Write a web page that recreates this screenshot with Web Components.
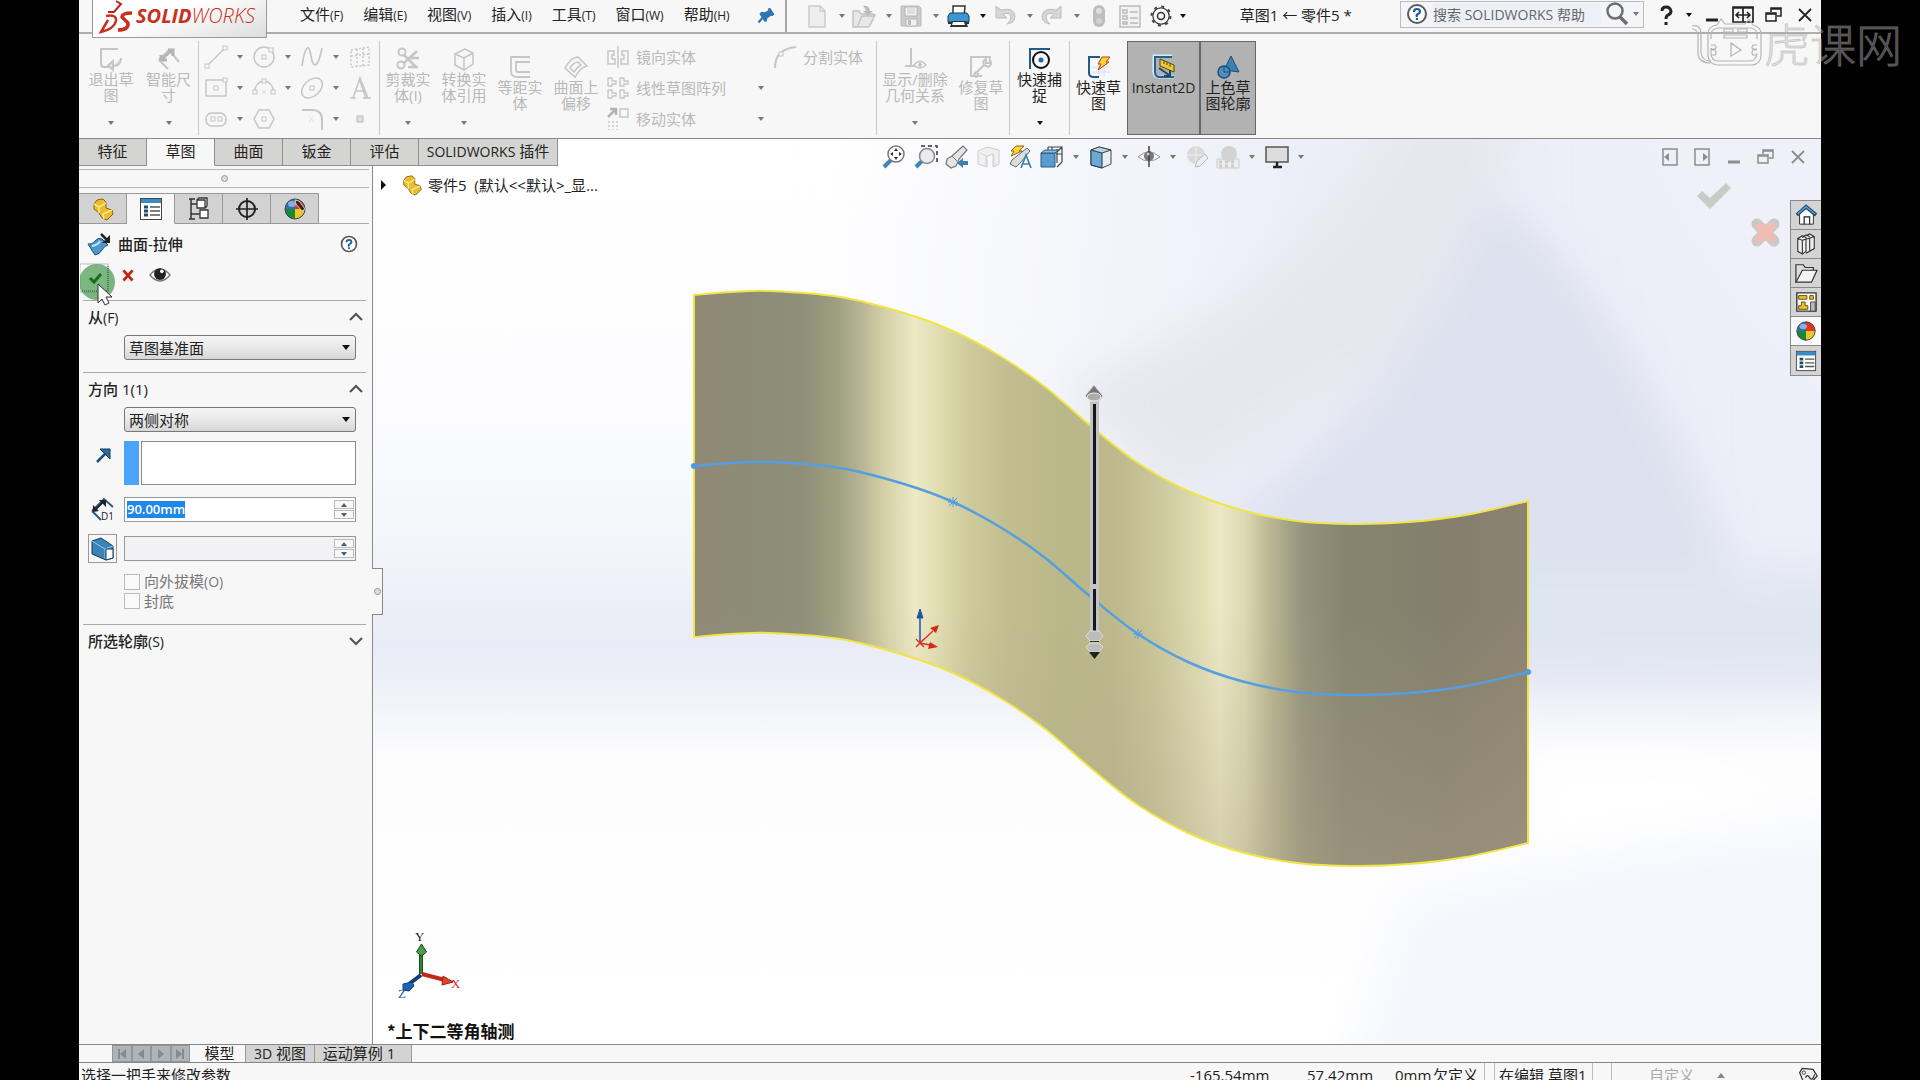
<!DOCTYPE html>
<html lang="zh-CN">
<head>
<meta charset="utf-8">
<title>SOLIDWORKS - 草图1 ← 零件5</title>
<style>
  html, body { margin: 0; height: 100%; background: #000; overflow: hidden; }
  body { font: 15px/16px "Open Sans", "Noto Sans CJK SC", sans-serif; color: #222; }
</style>
</head>
<body>
<sw-app></sw-app>
<script>
const G = '#c6c6c6';
const dot = (x, y, c = G) => `<rect x="${x - 2}" y="${y - 2}" width="4" height="4" fill="#f7f7f7" stroke="${c}"/>`;
const part = `<path d="M3 7l3-4 6-1 3 3v6l6 2 1 4-6 6-5-2-3-5-5-4z" fill="#e9bd2b" stroke="#8d6410"/><path d="M3 7l5 3v6m0-6l7-4M13 22l-1-5 9-4" fill="none" stroke="#fbe88e" stroke-width="1.5"/>`;
const ball = `<circle cx="12" cy="12" r="10" fill="#2a6fc0"/><path d="M12 2a10 10 0 0 1 10 10H12z" fill="#d93a20"/><path d="M22 12a10 10 0 0 1-10 10V12z" fill="#edc52d"/><path d="M12 22A10 10 0 0 1 2 12h10z" fill="#1c8a35"/><circle cx="12" cy="12" r="10" fill="none" stroke="#444"/><ellipse cx="9" cy="7" rx="4" ry="3" fill="#fff" opacity=".45"/>`;
const sheet = `<rect x="1.5" y="1.5" width="21" height="21" fill="#fff" stroke="#444"/><path d="M2 2h20v4H2z" fill="#3a8cc8"/><path d="M5 10h4M5 14h4M5 18h4" stroke="#234a66" stroke-width="3"/><path d="M11 10h10M11 14h10M11 18h10" stroke="#555" stroke-width="1.5"/>`;
const ICONS = {
  exit: `<path d="M11 20H5q-3 0-3-3V2h17" stroke="${G}" stroke-width="2" fill="none"/><path d="M22 11q0 8-8 8m0-5v9l-5-4.500z" stroke="${G}" stroke-width="2" fill="${G}" fill-opacity=".4"/>`,
  dim: `<path d="M2 13l10-10 10 12M2 13l9 9" fill="none" stroke="${G}" stroke-width="2"/><path d="M5 12l9-8M4 8v5h6M11 3h5v6" fill="none" stroke="#b4b4b4" stroke-width="3"/>`,
  line: `<path d="M3 21L21 3" stroke="${G}" stroke-width="1.500"/>${dot(3, 21)}${dot(21, 3)}`,
  circle: `<circle cx="12" cy="12" r="10" fill="none" stroke="${G}" stroke-width="1.500"/>${dot(12, 12)}${dot(19, 5)}`,
  spline: `<path d="M2 21C5 0 9-2 11 11s7 13 11-8" fill="none" stroke="${G}" stroke-width="1.700"/>`,
  plane: `<path d="M3 5l18-3v18l-18 2zM9 4v17M15 3v18M3 11l18-2" fill="none" stroke="${G}" stroke-width="1.500" stroke-dasharray="2 2"/>`,
  rect: `<rect x="2" y="4" width="20" height="16" fill="none" stroke="${G}" stroke-width="1.500"/>${dot(12, 12)}${dot(21, 4)}`,
  arc: `<path d="M2 17Q4 5 12 5t10 12" fill="none" stroke="${G}" stroke-width="1.500"/>${dot(3, 16)}${dot(12, 5)}${dot(21, 16)}<path d="M10 14l4 4m0-4l-4 4" stroke="#ddd"/>`,
  ellipse: `<ellipse cx="12" cy="12" rx="12" ry="8" transform="rotate(-42 12 12)" fill="none" stroke="${G}" stroke-width="1.500"/>${dot(12, 12)}`,
  textA: `<path d="M2 22h6M15 22h8M5 22L12 2l8 20M8 15h9M12 5l6 17" fill="none" stroke="${G}" stroke-width="1.500"/>`,
  slot: `<rect x="2" y="6" width="20" height="13" rx="6" fill="none" stroke="${G}" stroke-width="1.500"/>${dot(9, 12)}${dot(16, 12)}`,
  hex: `<path d="M7 3h10l5 9-5 9H7l-5-9z" fill="none" stroke="${G}" stroke-width="1.500"/>${dot(12, 12)}`,
  fillet: `<path d="M2 3h10q10 0 10 10v10" fill="none" stroke="${G}" stroke-width="2"/><path d="M9 9l5 6m0-6l-5 6" stroke="#e2e2e2"/>`,
  point: `<rect x="9" y="9" width="6" height="6" fill="#ddd" stroke="#bbb"/>`,
  trim: `<circle cx="6" cy="5" r="3.500" fill="none" stroke="${G}" stroke-width="2"/><circle cx="5" cy="18" r="3.500" fill="none" stroke="${G}" stroke-width="2"/><path d="M8 8l13 13M8 16L21 4M15 11h8M12 20h10" stroke="${G}" stroke-width="2.500"/>`,
  convert: `<path d="M3 7l10-5 8 4v11l-9 6-9-5zM3 7l9 4 9-5M12 11v12" fill="none" stroke="${G}" stroke-width="1.500"/>`,
  offset: `<path d="M22 2H3v14q0 6 6 6h13M22 7H8v8q0 2 2 2h12" fill="none" stroke="${G}" stroke-width="1.800"/>`,
  surfoff: `<path d="M1 13Q7 2 14 2l9 9q-6 1-12 11zM6 13q4-6 8-6l3 3q-4 2-7 7z" fill="none" stroke="${G}" stroke-width="1.500"/>`,
  mirror: `<path d="M12 1v22M2 6h6v4H6v4h3v5H2zM22 6h-6v4h2v4h-3v5h7z" fill="none" stroke="${G}" stroke-width="1.500"/>`,
  pattern: `<g fill="none" stroke="${G}" stroke-width="1.300"><path d="M2 2h4v3h4v3H6v2H2z"/><path d="M14 2h4v3h4v3h-4v2h-4zM2 14h4v3h4v3H6v2H2zM14 14h4v3h4v3h-4v2h-4z"/></g>`,
  move: `<path d="M2 10l7-7M4 2h6v6" stroke="#b4b4b4" stroke-width="2.500" fill="none"/><rect x="14" y="2" width="8" height="8" fill="none" stroke="${G}" stroke-width="1.500"/><path d="M3 14v9M7 14v9M11 14v9" stroke="#d4d4d4" stroke-width="2" stroke-dasharray="2 2"/>`,
  split: `<path d="M2 23Q2 4 23 2" fill="none" stroke="${G}" stroke-width="2"/>${dot(8, 9)}`,
  rel: `<path d="M8 1v18M2 19h11" stroke="${G}" stroke-width="2"/><path d="M11 18q6-7 12 0-6 6-12 0z" fill="#f7f7f7" stroke="${G}" stroke-width="1.500"/><circle cx="17" cy="18" r="2" fill="${G}"/>`,
  repair: `<path d="M13 21H2V2h20" fill="none" stroke="${G}" stroke-width="2"/><path d="M6 19l9-9m0 0q-2-4 2-6v4h4V5q3 5-2 7zM7 17q-4 4 0 5 3-1 2-4" stroke="${G}" stroke-width="2" fill="none"/>`,
  snap: `<path d="M2 22V2h20" fill="none" stroke="#1d5c8c" stroke-width="2"/><circle cx="13" cy="13" r="8" fill="none" stroke="#111" stroke-width="2"/><circle cx="13" cy="13" r="2.500" fill="#1d6ba8"/>`,
  rapid: `<path d="M12 8v14M17 8v14M5 12h18M5 17h18" stroke="#d8dfe6"/><path d="M13 2H2v16q0 4 5 4h5" fill="none" stroke="#1d5c8c" stroke-width="2"/><path d="M15 2h8l-4 5h3L11 15l3-6h-3z" fill="#ffd33a" stroke="#b0401c"/>`,
  instant: `<path d="M20 1H2v16q0 5 5 5h15" fill="none" stroke="#dceaf4" stroke-width="3"/><path d="M20 2H3v15q0 5 5 5h14" fill="none" stroke="#1d6396" stroke-width="2"/><path d="M8 4l14 6v7L8 11z" fill="#ecc936" stroke="#54480e"/><path d="M12 6v3m3-2v3m3-1v3" stroke="#54480e"/><path d="M7 13l10 7m1-5v6h-6" stroke="#1c4968" stroke-width="2" fill="none"/>`,
  shaded: `<path d="M15 1l8 16-15-2z" fill="#3b80b4" stroke="#1c4e76"/><circle cx="8" cy="17" r="6" fill="#4b8fc0" stroke="#1c4e76" stroke-width="1.500"/><path d="M8 11v6h6" fill="none" stroke="#1c4e76"/>`,
  newdoc: `<path d="M4 2h11l5 5v16H4zM15 2v5h5" fill="#eee" stroke="#ccc" stroke-width="1.500"/>`,
  open: `<path d="M1 23V7h6l2 3h12l2 1-6 12zM5 23l5-11h13" fill="#e8e8e8" stroke="#c4c4c4" stroke-width="1.500"/><path d="M11 2q6-1 7 5h3l-5 5-5-5h3q0-2-3-5z" fill="#bbb"/>`,
  save: `<path d="M2 2h18l2 2v18H2z" fill="#ccc" stroke="#bbb"/><path d="M6 3h12v9H6zM7 15h11v7H7z" fill="#f2f2f2" stroke="#b4b4b4"/><path d="M8 5h8M8 7h8M8 9h8" stroke="#ccc"/><path d="M9 16h3v5H9z" fill="#bbb"/>`,
  print: `<path d="M7 12V2h12l-1 10" fill="#fff" stroke="#333" stroke-width="1.500"/><path d="M2 12l2-3h17l2 3v6H2z" fill="#3c96d0" stroke="#123f60"/><path d="M2 18h21v2H2zM6 17h14l2 6H4z" fill="#333"/><path d="M7 18h11l1 3H6z" fill="#fff"/>`,
  undo: `<path d="M3 2v12h11l-4-4q7-2 8 3 0 4-4 7 8-1 8-8-1-9-14-6z" fill="#d6d6d6" stroke="#bebebe"/>`,
  redo: `<path d="M21 2v12H10l4-4q-7-2-8 3 0 4 4 7-8-1-8-8 1-9 14-6z" fill="#d6d6d6" stroke="#bebebe"/>`,
  lights: `<rect x="6" y="1" width="12" height="22" rx="6" fill="#bdbdbd"/><circle cx="12" cy="7" r="3" fill="#dedede"/><circle cx="12" cy="17" r="3" fill="#d0d0d0"/>`,
  options: `<rect x="2" y="2" width="20" height="21" fill="#f2f2f2" stroke="#bdbdbd" stroke-width="1.500"/><path d="M5 6h4v3H5zM5 12h4v3H5zM5 18h4v2H5z" fill="none" stroke="#bbb" stroke-width="1.500"/><path d="M12 8h8M12 14h8M12 19h8" stroke="#bbb" stroke-width="1.500"/>`,
  gear: `<circle cx="12" cy="12" r="8" fill="none" stroke="#333" stroke-width="1.500"/><circle cx="12" cy="12" r="9.500" fill="none" stroke="#444" stroke-width="2" stroke-dasharray="3 4.460"/><circle cx="12" cy="12" r="7.500" fill="#f7f7f7"/><circle cx="12" cy="12" r="3.500" fill="none" stroke="#333" stroke-width="1.500"/>`,
  pin: `<path d="M13 4l3-1 6 7-2 2-2 0-4 4v4l-3 0-7-8 2-3 4 0 4-3z" fill="#2f75b5" transform="rotate(8 12 12)"/><path d="M8 15l-5 6" stroke="#2f75b5" stroke-width="2.500"/>`,
  help: `<circle cx="12" cy="12" r="9" fill="#fff" stroke="#5a5a5a" stroke-width="2"/><path d="M9 10q0-3 3-3t3 3q0 1-2 2t-1 3m0 1v2" fill="none" stroke="#1d5f98" stroke-width="2.200"/>`,
  search: `<circle cx="10" cy="9" r="7.500" fill="none" stroke="#6e6e6e" stroke-width="2.500"/><path d="M15 15l7 7" stroke="#6e6e6e" stroke-width="3.500"/>`,
  q: `<path d="M8 8q0-4 4-4t5 4q0 3-3 4-2 1-2 4m0 3v3" fill="none" stroke="#222" stroke-width="3"/>`,
  min: `<path d="M6 17h12" stroke="currentColor" stroke-width="3"/>`,
  spread: `<path d="M2 4h20v15H2zM2 5h20M12 4v15" fill="none" stroke="#222" stroke-width="1.700"/><path d="M5 12h14M8 9l-3 3 3 3m8-6l3 3-3 3" fill="none" stroke="#222" stroke-width="1.500"/>`,
  restore: `<path d="M4 10h10v8H4zM4 11h10M9 9V5h10v8h-4M9 6h10" fill="none" stroke="currentColor" stroke-width="1.500"/>`,
  close: `<path d="M6 6l12 12M18 6L6 18" stroke="currentColor" stroke-width="1.800"/>`,
  dockl: `<path d="M5 4h14v16H5z" fill="none" stroke="currentColor" stroke-width="1.500"/><path d="M6 12l5-4v8z" fill="currentColor"/>`,
  dockr: `<path d="M5 4h14v16H5z" fill="none" stroke="currentColor" stroke-width="1.500"/><path d="M18 12l-5-4v8z" fill="currentColor"/>`,
  zoomfit: `<path d="M9 15l-7 7" stroke="#3f86b8" stroke-width="4"/><circle cx="14" cy="9" r="8" fill="#fff" stroke="#777" stroke-width="1.500"/><path d="M14 3l2 3h-4zM14 15l2-3h-4zM8 9l3-2v4zM20 9l-3-2v4z" fill="#333"/>`,
  zoomarea: `<path d="M7 1h16v16" fill="none" stroke="#333" stroke-width="1.500" stroke-dasharray="4 3"/><path d="M8 16l-6 6" stroke="#3f86b8" stroke-width="4"/><circle cx="13" cy="11" r="7.500" fill="#e9ecf0" stroke="#888" stroke-width="1.500"/>`,
  prev: `<path d="M2 14l5-3L18 1l4 4-8 9-3 7-5 2-5-4z" fill="#e4e4e4" stroke="#777" stroke-width="1.200"/><path d="M7 11l5 5" stroke="#777"/><path d="M23 18h-8" stroke="#3a80b0" stroke-width="4"/><path d="M12 18l6-5v10z" fill="#3a80b0"/>`,
  section: `<path d="M1 6l9-4 12 3v14l-6 3V9l-6 2v11l-9-3z" fill="#f0f0f0" stroke="#ccc"/><path d="M3 8l6 3v10M17 9v12" stroke="#d4d4d4" fill="none"/>`,
  dyn: `<path d="M8 1h8l-5 5h3L3 11l3-5H3z" fill="#ffd33a" stroke="#8a6a10"/><path d="M4 15L19 3l3 3-9 11-5 5-6-3z" fill="#ddd" stroke="#666"/><path d="M13 23l5-13 5 13M14 19h7" fill="none" stroke="#3a80b0" stroke-width="1.700"/>`,
  orient: `<path d="M8 2h14v15M12 2v10M17 4v14M8 2v5M22 17l-5 5M22 2l-5 5M22 9h-6M14 5v5" fill="none" stroke="#444" stroke-width="1.200"/><path d="M1 8h14v14H1z" fill="#5a9ccc" stroke="#245b85"/><path d="M1 8l4-3h14l-4 3z" fill="#8cbddf" stroke="#245b85"/>`,
  style: `<path d="M2 5l8-3 12 3v14l-9 4-11-3z" fill="#e9eef2" stroke="#444"/><path d="M2 5l11 3v15L2 20z" fill="#6ba8d2" stroke="#235"/><path d="M2 5l8-3 12 3-9 3z" fill="#b8d4e8" stroke="#444"/>`,
  eye: `<path d="M1 12Q12 2 23 12 12 20 1 12z" fill="#f4f4f4" stroke="#999"/><circle cx="12" cy="11" r="5" fill="#777"/><path d="M12 1v21" stroke="#444" stroke-width="1.500"/><circle cx="11" cy="9" r="1.500" fill="#ccc"/>`,
  appear: `<circle cx="11" cy="10" r="9" fill="#d9d9d9"/><path d="M2 10h18M11 1v18" stroke="#eee"/><path d="M10 22l2-6 8-7 3 4-8 8z" fill="#efefef" stroke="#bbb"/>`,
  scene: `<path d="M1 14h22v9H1z" fill="#eee" stroke="#ccc"/><path d="M3 17h18M3 21h18" stroke="#ccc" stroke-width="3" stroke-dasharray="3 3"/><circle cx="13" cy="9" r="8" fill="#d3d3d3"/>`,
  monitor: `<path d="M1 2h22v15H1z" fill="#ddd" stroke="#555" stroke-width="1.500"/><path d="M12 17v4M8 22h9" stroke="#222" stroke-width="2.500"/>`,
  part, ball, sheet,
  tree: `<path d="M4 2v20M2 2h6M2 22h6M4 7h8M4 17h9" fill="none" stroke="#333" stroke-width="1.500"/><path d="M10 3h8v8h-8zM13 13h8v8h-8zM10 3l2-2h8v8l-2 2" fill="#fff" stroke="#333" stroke-width="1.300"/>`,
  target: `<circle cx="12" cy="12" r="8" fill="none" stroke="#222" stroke-width="2"/><path d="M12 1v22M1 12h22" stroke="#222" stroke-width="1.700"/>`,
  display: ball + `<path d="M12 3l4 1 6 8-3 2-6-7z" fill="#35251b" stroke="#eee" stroke-width=".8"/>`,
  surface: `<path d="M1 12q4 1 7-3t7-2l6 6q-4 1-6 5t-7 5z" fill="#4d97cd" stroke="#1b4d78"/><path d="M5 14q6-1 8-5" stroke="#bfe0f5" fill="none" stroke-width="2"/><path d="M14 2l7 7" stroke="#222" stroke-width="2.500"/><path d="M23 3v8h-8z" fill="#222"/>`,
  xred: `<path d="M7 7l10 11M17 7L7 18" stroke="#c42614" stroke-width="3"/>`,
  preview: `<path d="M1 12Q12-1 23 12 12 25 1 12z" fill="#fff" stroke="#777" stroke-width="1.500"/><circle cx="12" cy="11" r="6.500" fill="#222"/><circle cx="14" cy="8" r="2" fill="#fff"/>`,
  dir: `<path d="M6 19L14 11" stroke="#1f4f78" stroke-width="2.500"/><path d="M9 6h10v10z" fill="#2a6ca0" stroke="#163c5c"/>`,
  d1: `<path d="M1 13L13 1l9 8M1 13l9 9" fill="none" stroke="#235e8e" stroke-width="2"/><path d="M5 11l7-7" stroke="#222" stroke-width="2"/><path d="M2 14V7l6 6zM8 2h7v7z" fill="#222"/><text x="10" y="22" font-family="Open Sans, sans-serif" font-size="10" fill="#222">D1</text>`,
  draft: `<path d="M1 4l9-3 12 8v12l-7 2-14-6z" fill="#3b83b7" stroke="#133a5a"/><path d="M1 4l13 8v10M14 12l8-3" stroke="#9cc9e8" fill="none"/><path d="M15 12h7v9l-7 2z" fill="#fff" stroke="#133a5a"/>`,
  up: `<path d="M6 15l6-6 6 6" fill="none" stroke="#555" stroke-width="2.200"/>`,
  down: `<path d="M6 9l6 6 6-6" fill="none" stroke="#555" stroke-width="2.200"/>`,
  home: `<path d="M5 11v11h15V11l-7-7z" fill="#fff" stroke="#222"/><path d="M10 22v-8h6v8" fill="none" stroke="#222" stroke-width="1.300"/><path d="M2 12L12 3l11 9" fill="none" stroke="#1e4d72" stroke-width="4"/><path d="M3 11l9-8 10 8" fill="none" stroke="#5ea1ce" stroke-width="1.500"/>`,
  library: `<path d="M3 6l5-3 4 2v15l-4 3-5-3zM8 5l4-3 4 2M12 3l4-2 5 3v13l-9 5M3 6l5 2v15M12 6v15M16 5v15M8 8l13-4" fill="#eee" stroke="#333" stroke-width="1.200"/>`,
  folder: `<path d="M1 22V3h8l2 3h9v3" fill="#ddd" stroke="#333" stroke-width="1.300"/><path d="M1 22L8 9h16l-6 13z" fill="#f3f3f3" stroke="#333" stroke-width="1.300"/>`,
  palette: `<path d="M2 2h21v20H2z" fill="#fff" stroke="#333" stroke-width="1.500"/><path d="M4 5h9v4H4zM16 5h4v4h-4zM7 12h4v4h3v4H4v-4h3z" fill="#e8c12e" stroke="#5c4a0a"/><path d="M17 12h5v10h-5z" fill="#bbb" stroke="#444"/>`,
  tag: `<path d="M2 8l3-5 13 1 5 8-9 10-8-4z" fill="#eee" stroke="#333" stroke-width="1.500"/><circle cx="7" cy="8" r="2" fill="none" stroke="#333"/><path d="M9 14q2-5 5 0t6-4" fill="none" stroke="#333" stroke-width="1.500"/>`,
  ds: `<path d="M17-4l5 3-7 8h-6" fill="none" stroke="#b5261b" stroke-width="2"/><path d="M7 11q11-2 10 5-2 8-15 11l7-12" fill="none" stroke="#c8301f" stroke-width="2.500"/><path d="M33 8q-10 0-10 4l6 6q1 7-10 7" fill="none" stroke="#c8301f" stroke-width="3.500"/>`,
};

const define = (name, css, html) => {
  const t = document.createElement('template');
  t.innerHTML = `<style>*{box-sizing:border-box}button{font:inherit;color:inherit;background:none;border:0;padding:0;margin:0}${css}</style>${html}`;
  customElements.define(name, class extends HTMLElement {
    constructor() { super(); this.attachShadow({ mode: 'open' }).append(t.content.cloneNode(true)); }
  });
};
const ic = n => `<sw-icon name="${n}"></sw-icon>`;
const caret = (c = '') => `<sw-caret class="${c}"></sw-caret>`;

customElements.define('sw-icon', class extends HTMLElement {
  constructor() { super(); this.attachShadow({ mode: 'open' }); }
  connectedCallback() {
    this.shadowRoot.innerHTML = `<style>:host{display:block;flex:none;width:24px;height:24px}svg{display:block;width:100%;height:100%;overflow:visible}</style><svg viewBox="0 0 24 24" aria-hidden="true">${ICONS[this.getAttribute('name')]}</svg>`;
  }
});
define('sw-caret', `:host{display:block;flex:none;width:0;height:0;border:3px solid transparent;border-top:4px solid var(--caret,#777);border-bottom:0}`, '');

/* ---- title bar ---- */
const menu = (t, k) => `<button>${t}<small>(${k})</small></button>`;
const quick = (n, c = '') => `<button class="q">${ic(n)}${caret(c)}</button>`;
define('title-bar', `
  :host{display:flex;align-items:center;height:34px;padding-bottom:3px;background:#f7f7f7;border-bottom:2px solid #aeaeae;position:relative}
  .logo{position:relative;z-index:2;align-self:flex-start;flex:none;width:175px;height:38px;margin-left:13px;padding:0 0 4px 6px;border:1px solid #999;border-top:0;background:linear-gradient(160deg,#fff 40%,#ddd);display:flex;align-items:center;gap:13px}
  .logo b,.logo i{font-size:20px;line-height:32px;font-style:italic;color:#c8301f}.logo i{font-weight:300}
  .logo sw-icon{height:26px}.logo span{align-self:flex-end;line-height:32px}
  nav{display:flex;gap:20px;margin-left:33px}nav button{white-space:nowrap}small{font-size:12px}
  .pin{margin-left:26px;width:20px;height:20px}
  .quick{display:flex;align-items:center;align-self:stretch;margin-left:9px;padding-left:18px;border-left:2px solid #a8a8a8;height:32px}
  .q{display:flex;align-items:center;gap:10px;width:47px}.black{--caret:#111}
  .tools{display:flex;align-items:center;gap:7px}
  h1{flex:1;text-align:center;font:inherit;margin:0;padding-left:6px;white-space:nowrap}
  .find{display:flex;align-items:center;width:244px;height:27px;border:1px solid #bbb;background:#f4f5f8;padding:0 4px;gap:4px;margin-top:-1px}
  input{flex:1;min-width:0;border:0;background:#eef0f7;font:inherit;font-size:14px;color:#666;padding:0;height:22px;outline:0}input::placeholder{color:#666;opacity:1}
  .win{display:flex;align-items:center;margin:0 4px 0 10px;color:#222}.win sw-icon{margin-right:7px}.win sw-caret{margin:0 8px 0 1px}.win sw-icon:last-child{margin-right:0}
`, `<div class="logo">${ic('ds')}<span><b>SOLID</b><i>WORKS</i></span></div>
<nav>${menu('文件', 'F')}${menu('编辑', 'E')}${menu('视图', 'V')}${menu('插入', 'I')}${menu('工具', 'T')}${menu('窗口', 'W')}${menu('帮助', 'H')}</nav>
<sw-icon class="pin" name="pin"></sw-icon>
<div class="quick">${quick('newdoc')}${quick('open')}${quick('save')}${quick('print', 'black')}${quick('undo')}${quick('redo')}
<div class="tools">${ic('lights')}${ic('options')}${ic('gear')}${caret('black')}</div></div>
<h1>草图1 ← 零件5 *</h1>
<label class="find">${ic('help')}<input placeholder="搜索 SOLIDWORKS 帮助" aria-label="搜索">${ic('search')}${caret()}</label>
<div class="win black">${ic('q')}${caret('black')}${ic('min')}${ic('spread')}${ic('restore')}${ic('close')}</div>`);

/* ---- ribbon ---- */
define('ribbon-button', `
  :host{display:block;flex:none;width:56px;color:#b9b9b9}
  button{display:flex;flex-direction:column;align-items:center;width:100%;height:94px;padding:6px 0 10px}
  :host([low]) button{padding-top:14px}
  :host([on]){color:#222}:host([pressed]) button{background:#b2b2b2;border:1px solid #666;padding-top:13px}
  span{white-space:pre;text-align:center;line-height:16px}
  ::slotted(sw-caret){margin-top:auto}
`, `<button><slot name="icon"></slot><span><slot></slot></span><slot name="caret"></slot></button>`);
const rb = (n, t, a = '', c = 1) => `<ribbon-button ${a}><sw-icon slot="icon" name="${n}"></sw-icon>${t}${c ? '<sw-caret slot="caret"></sw-caret>' : ''}</ribbon-button>`;
const cell = (n, c = 1) => `<button>${ic(n)}${c ? caret() : ''}</button>`;
define('sw-ribbon', `
  :host{display:flex;height:105px;padding:7px 0 3px;background:#f7f7f7;border-bottom:1px solid #888}
  .sep{flex:none;width:1px;height:94px;background:#c8c8c8}
  .grid{display:grid;grid-template-columns:repeat(3,48px) 24px;grid-template-rows:repeat(3,31px);padding:0 7px 0 5px}
  .grid button,.row{display:flex;align-items:center;gap:9px}
  .list{display:grid;grid-template-columns:152px 1fr;grid-template-rows:repeat(3,31px);width:272px;padding-left:2px;color:#b9b9b9;white-space:nowrap}
  .row{gap:6px}.split{padding-left:15px}
  .first{width:60px;padding-left:4px}.w57{width:57px}.w59{width:59px}.w73{width:73px}.w76{width:76px}
  .i{font-size:14px}.black{--caret:#111}
`, `${rb('exit', '退出草\n图', 'class="first"')}${rb('dim', '智能尺\n寸', 'class="w59"')}<i class="sep"></i>
<div class="grid">${cell('line')}${cell('circle')}${cell('spline')}${cell('plane', 0)}${cell('rect')}${cell('arc')}${cell('ellipse')}${cell('textA', 0)}${cell('slot')}${cell('hex', 0)}${cell('fillet')}${cell('point', 0)}</div>
<i class="sep"></i>${rb('trim', '剪裁实\n体(I)')}${rb('convert', '转换实\n体引用')}${rb('offset', '等距实\n体', 'low', 0)}${rb('surfoff', '曲面上\n偏移', 'low', 0)}
<div class="list"><button class="row">${ic('mirror')}镜向实体</button><button class="row split">${ic('split')}分割实体</button>
<button class="row">${ic('pattern')}线性草图阵列</button><button class="row">${caret()}</button>
<button class="row">${ic('move')}移动实体</button><button class="row">${caret()}</button></div>
<i class="sep"></i>${rb('rel', '显示/删除\n几何关系', 'class="w76"')}${rb('repair', '修复草\n图', 'low', 0)}
<i class="sep"></i>${rb('snap', '快速捕\n捉', 'on class="w59 black"')}
<i class="sep"></i>${rb('rapid', '快速草\n图', 'on low class="w57"', 0)}${rb('instant', '<span class="i">Instant2D</span>', 'on low pressed class="w73"', 0)}${rb('shaded', '上色草\n图轮廓', 'on low pressed', 0)}`);

define('command-tabs', `
  :host{display:flex;height:27px;flex:none}
  button{width:68px;height:27px;background:#d4d4d2;border:1px solid #909090;border-top:0;border-left:0;white-space:nowrap;padding-bottom:2px}
  button.on{background:#f7f7f7;border-bottom-color:#f7f7f7}.wide{width:139px}small{font-size:14px}
`, `<button>特征</button><button class="on">草图</button><button>曲面</button><button>钣金</button><button>评估</button><button class="wide"><small>SOLIDWORKS</small> 插件</button>`);

const hud = (n, w, c) => `<button style="width:${w}px">${ic(n)}${c ? caret() : ''}</button>`;
define('heads-up-bar', `
  :host{display:flex;flex:1;height:36px;align-items:center;padding-left:324px;color:#8d8d8d}
  button{display:flex;align-items:center;gap:9px}.ctl{display:flex;gap:8px;margin-left:auto;padding-right:11px}
`, `${hud('zoomfit', 32)}${hud('zoomarea', 31)}${hud('prev', 32)}${hud('section', 31)}${hud('dyn', 32)}${hud('orient', 49, 1)}${hud('style', 48, 1)}${hud('eye', 48, 1)}${hud('appear', 31)}${hud('scene', 49, 1)}${hud('monitor', 48, 1)}
<div class="ctl">${['dockl', 'dockr', 'min', 'restore', 'close'].map(ic).join('')}</div>`);

/* ---- property panel ---- */
define('panel-group', `
  :host{display:block;margin:0 6px 0 4px;border-top:1px solid #aaa;padding:7px 0 0 5px}
  header{display:flex;align-items:center;justify-content:space-between;height:18px;margin-bottom:9px;font-weight:500}
  header sw-icon{margin-right:-2px}
  .up{display:block}.down{display:none}:host([closed]) .up{display:none}:host([closed]) .down{display:block}
`, `<header><span><slot name="title"></slot></span><sw-icon class="up" name="up"></sw-icon><sw-icon class="down" name="down"></sw-icon></header><slot></slot>`);

define('drop-down', `
  :host{display:grid;align-items:center;height:25px;flex:1}
  select{grid-area:1/1;appearance:none;width:100%;height:25px;font:inherit;color:#222;padding:0 4px;border:1px solid #777;border-radius:3px;background:linear-gradient(#f6f6f6,#e9e9e9 50%,#d6d6d6)}
  i{grid-area:1/1;justify-self:end;margin-right:6px;border:4px solid transparent;border-top:5px solid #111;border-bottom:0;pointer-events:none}
`, `<select aria-label="选项"></select><i></i>`);
define('num-field', `
  :host{display:flex;flex:1;height:25px;border:1px solid #999;background:#fff;padding:2px 1px}
  :host([off]){background:#f2f1f4}
  input{flex:1;min-width:0;border:0;padding:0 0 0 1px;background:transparent;font:600 13px/17px "Open Sans",sans-serif;outline:0;height:17px;margin-top:1px}
  input::selection{background:#1f87e8;color:#fff}
  div{display:flex;flex-direction:column;gap:1px;width:20px}
  button{flex:1;border:1px solid #bbb;display:flex;align-items:center;justify-content:center;background:#f8f8f8}
  i{border:3px solid transparent}.u{border-top:0;border-bottom:4px solid #4d5f70}.d{border-bottom:0;border-top:4px solid #4d5f70}
`, `<input aria-label="深度"><div><button aria-label="增加"><i class="u"></i></button><button aria-label="减少"><i class="d"></i></button></div>`);

define('property-panel', `
  :host{display:block;width:294px;flex:none;background:#f7f7f7;border-right:1px solid #888;position:relative}
  .grip{height:19px;margin:3px 3px 5px 0;border:1px solid #b5b5b5;border-width:1px 0;display:flex;justify-content:center;align-items:center}
  .knob{display:block;width:7px;height:7px;border:1px solid #999;border-radius:50%;background:#ddd}
  .tabs{display:flex;height:31px;margin-right:3px;border-bottom:1px solid #aaa}
  .tabs button{width:48px;height:31px;background:#d2d2d2;border:1px solid #999;border-left:0;display:grid;place-items:center}
  .tabs .on{background:#f7f7f7;border-bottom-color:#f7f7f7}
  .head{display:flex;align-items:center;padding:0 13px 0 8px;height:39px;font-weight:500;gap:7px}.head sw-icon:last-child{margin-left:auto;width:20px;height:20px}
  .act{display:flex;align-items:center;height:37px;padding:0 0 13px 37px;gap:8px;position:relative}.act sw-icon{height:22px}
  .ok{position:absolute;left:1px;top:-1px;width:48px;height:46px;z-index:3}
  .row{display:flex;align-items:center;min-height:25px;gap:7px;padding-right:10px}.k{width:29px;display:grid;place-items:center;flex:none}
  .gap{margin-bottom:9px}small{font-size:14px}
  .sel{display:flex;flex:1;height:44px;gap:2px}.sel i{width:15px;background:#4ba3fb}.sel b{flex:1;border:1px solid #8c8c8c;background:#fff}
  .top{align-items:flex-start;margin-bottom:12px}.top .k{padding-top:2px}
  .wide{margin-bottom:12px}
  .btn{border:1px solid #999;height:29px}.chk{display:flex;align-items:center;color:#777;height:19px;gap:4px;padding-left:36px}
  input{appearance:none;width:16px;height:16px;margin:0;border:1px solid #bbb;background:#fafafa}
  .handle{position:absolute;left:100%;top:402px;width:11px;height:47px;border:1px solid #888;border-left:0;background:#f7f7f7;display:grid;place-items:center}
  .last{margin-bottom:14px}
`, `<div class="grip"><i class="knob"></i></div>
<div class="tabs"><button>${ic('part')}</button><button class="on">${ic('sheet')}</button><button>${ic('tree')}</button><button>${ic('target')}</button><button>${ic('display')}</button></div>
<div class="head">${ic('surface')}<span>曲面-拉伸</span>${ic('help')}</div>
<div class="act"><svg class="ok" viewBox="80 260 48 46"><rect x="80" y="262" width="28" height="28" fill="#fff" stroke="#bbb"/><circle cx="97" cy="280" r="18" fill="#3c9448" fill-opacity=".68"/><path d="M82 289h26V263" stroke="#365f3a" fill="none" stroke-dasharray="1 1"/><path d="M90 276l4 4 7-8" fill="none" stroke="#157018" stroke-width="3"/><path d="M98 282v19l4-4 3 6 4-2-3-6h6z" fill="#fff" stroke="#333"/></svg>${ic('xred')}${ic('preview')}</div>
<panel-group><span slot="title">从<small>(F)</small></span><div class="row wide"><span class="k"></span><drop-down options="草图基准面"></drop-down></div></panel-group>
<panel-group><span slot="title">方向 1(1)</span>
<div class="row gap"><span class="k"></span><drop-down options="两侧对称"></drop-down></div>
<div class="row top"><span class="k">${ic('dir')}</span><div class="sel"><i></i><b></b></div></div>
<div class="row wide"><span class="k">${ic('d1')}</span><num-field value="90.00mm"></num-field></div>
<div class="row gap"><button class="k btn" aria-label="拔模">${ic('draft')}</button><num-field off></num-field></div>
<label class="chk"><input type="checkbox" disabled><span>向外拔模<small>(O)</small></span></label>
<label class="chk last"><input type="checkbox" disabled>封底</label></panel-group>
<panel-group closed><span slot="title">所选轮廓<small>(S)</small></span></panel-group>
<div class="handle"><i class="knob"></i></div>`);

/* ---- 3D scene ---- */
const pts = [[694,466],[732,463],[770,462],[840,468],[904,484],[953,502],[1000,527],[1044,557],[1092,598],[1138,634],[1188,662],[1241,681],[1297,692],[1353,695],[1409,693],[1466,686],[1528,672]];
const curve = (p, dy) => {
  let s = '';
  for (let i = 0; i < p.length - 1; i++) {
    const a = p[i - 1] || p[i], b = p[i], c = p[i + 1], d = p[i + 2] || c;
    s += ` C${b[0] + (c[0] - a[0]) / 6} ${b[1] + dy + (c[1] - a[1]) / 6} ${c[0] - (d[0] - b[0]) / 6} ${c[1] + dy - (d[1] - b[1]) / 6} ${c[0]} ${c[1] + dy}`;
  }
  return s;
};
const H = 171, rev = [...pts].reverse();
const outline = `M694 ${466 - H}${curve(pts, -H)} L1528 ${672 + H}${curve(rev, H)} Z`;
const stops = [[0,'#8f8975'],[6,'#8d8b76'],[13,'#8f8f78'],[17,'#9e9e80'],[20,'#b7b592'],[23,'#d5d2a8'],[26.5,'#edeac4'],[29,'#e2dfb4'],[33,'#cdca9b'],[38,'#c2bd90'],[44,'#b9b889'],[50,'#bcb88c'],[55,'#c8c598'],[60,'#dddab0'],[63,'#ebe9c5'],[66,'#dcdab4'],[69,'#bab894'],[73,'#95937b'],[78,'#86846f'],[90,'#837f6c'],[100,'#8b8371']];
const star = (x, y) => `<path d="M${x - 4} ${y - 4}l8 8m0-8l-8 8M${x} ${y - 5}v10M${x - 5} ${y}h10" stroke="#4e9de0"/>`;
define('model-scene', `
  :host{display:block;position:absolute;inset:0;background:#fff}svg{position:absolute;inset:0;width:100%;height:100%}
`, `<svg viewBox="79 139 1742 905" preserveAspectRatio="none" aria-hidden="true">
<defs><linearGradient id="floor" x1="0" y1="0" x2="0" y2="1"><stop offset="0" stop-color="#fff"/><stop offset=".28" stop-color="#fdfdff"/><stop offset=".45" stop-color="#f3f5fa"/><stop offset=".56" stop-color="#e9ebf6"/><stop offset=".62" stop-color="#f1f3f9"/><stop offset=".69" stop-color="#fdfdfe"/><stop offset="1" stop-color="#fff"/></linearGradient>
<linearGradient id="sky" x1="0" x2="1"><stop offset="0" stop-color="#ebedf7" stop-opacity="0"/><stop offset=".45" stop-color="#ebedf7" stop-opacity=".9"/><stop offset="1" stop-color="#edeff8"/></linearGradient>
<filter id="soft" x="-30%" y="-30%" width="160%" height="160%"><feGaussianBlur stdDeviation="22"/></filter></defs>
<rect x="79" y="139" width="1742" height="905" fill="url(#floor)"/>
<g filter="url(#soft)"><path d="M820 80H1880V690H1300Q1120 560 940 400Q820 300 820 80z" fill="url(#sky)"/>
<path d="M1400 80H1540L1440 330L1180 500L1060 390Q1320 290 1400 80z" fill="#e6e8ee"/>
<path d="M1490 190Q1640 300 1760 640L1200 530Q1400 420 1490 190z" fill="#dde1ef"/>
<path d="M1640 80h240v330q-160-80-240-330z" fill="#f0f0f8"/>
<path d="M1350 570h530v110h-510z" fill="#e0e5f2"/><path d="M1400 900q200-60 480-80v280h-540z" fill="#f5f7fd"/>
<path d="M1540 770q140-20 240 30-100 50-240 40z" fill="#fff"/></g></svg>
<svg viewBox="79 139 1742 905" role="img" aria-label="曲面模型">
<defs><linearGradient id="metal">${stops.map(s => `<stop offset="${s[0]}%" stop-color="${s[1]}"/>`).join('')}</linearGradient>
<linearGradient id="shade" x1="0" y1="0" x2="0" y2="1"><stop offset=".55" stop-color="#b3a68c" stop-opacity="0"/><stop offset="1" stop-color="#b3a68c" stop-opacity=".4"/></linearGradient></defs>
<path d="${outline}" fill="url(#metal)"/><path d="${outline}" fill="url(#shade)"/><path d="${outline}" fill="none" stroke="#f0e545" stroke-width="2"/>
<path d="M694 466${curve(pts, 0)}" fill="none" stroke="#559fe0" stroke-width="2.500"/>
<circle cx="694" cy="466" r="3" fill="#4a9ae6"/><circle cx="1528" cy="672" r="3" fill="#4a9ae6"/>${star(953, 502)}${star(1138, 634)}
<rect x="1090" y="400" width="9" height="232" fill="#c4c4c4"/><path d="M1094.500 404V584M1094.500 589V631" stroke="#16181c" stroke-width="3"/>
<path d="M1094 385l9 11-4 5h-9l-5-5z" fill="#777" stroke="#ddd"/><ellipse cx="1094" cy="397" rx="7" ry="4" fill="#aaa" stroke="#eee"/>
<path d="M1086 636l4-5h9l4 5-4 5h-9zM1086 647l4-4h9l4 4-4 5h-9z" fill="#bdbdbd" stroke="#ddd"/><path d="M1090 641.500h9" stroke="#333"/><path d="M1089 652h11l-5.500 7z" fill="#222"/>
<path d="M920 642V618" stroke="#1c56a8" stroke-width="1.500"/><path d="M920 609l3 9h-6z" fill="#1c56a8" stroke="#1c56a8"/>
<path d="M920 643l13-12M920 643l10 2M916 639l8 8m0-8l-8 8" stroke="#e02b1c" stroke-width="1.300"/><path d="M939 625l-3 8-6-5zM938 647l-10 2 2-7z" fill="#d6281a"/>
<path d="M421 974V950" stroke="#184e1b" stroke-width="4"/><path d="M421 974V950" stroke="#3c9640" stroke-width="1.500"/><path d="M421.500 944l5 8-5 4-5-4z" fill="#48a04c" stroke="#153f17"/>
<path d="M422 974l23 6" stroke="#c22815" stroke-width="4"/><path d="M443 976l10 6-11 3z" fill="#e4442c" stroke="#a01e10"/>
<path d="M421 975l-12 9" stroke="#123f78" stroke-width="4"/><path d="M403 984l9-2 2 4-5 5-6-1z" fill="#2063b4" stroke="#123f78"/>
<g font-family="Liberation Serif, serif" font-size="13"><text x="415" y="941" fill="#222">Y</text><text x="451" y="988" fill="#d6281a">X</text><text x="398" y="998" fill="#1c56a8">Z</text></g>
</svg>`);

define('view-overlay', `
  :host{display:flex;flex:1;position:relative;flex-direction:column;justify-content:space-between;padding:0 0 4px}
  .tree{display:flex;align-items:center;margin:7px 0 0 8px;height:24px;color:#222}
  .tree i{border:5px solid transparent;border-left:5px solid #111;border-right:0}.tree sw-icon{margin:0 5px 0 15px;width:22px;height:22px}span{white-space:pre}
  .view{margin:0 0 0 14px;font:700 17px/18px "Noto Sans CJK SC",sans-serif;color:#111}
  .pane{position:absolute;right:0;top:34px;width:31px;border:1px solid #888;border-right:0;background:#d4d4d4}
  .pane button{display:grid;place-items:center;width:30px;height:29px;border-bottom:1px solid #888}.pane button:last-child{border:0}.pane .on{background:#fafafa}.pane sw-icon{width:22px;height:22px}
  .confirm{position:absolute;right:38px;top:14px;width:88px;height:68px}
`, `<div class="tree"><i></i>${ic('part')}<span>零件5  (默认&lt;&lt;默认&gt;_显...</span></div>
<p class="view">*上下二等角轴测</p>
<svg class="confirm" viewBox="1695 179 88 68"><path d="M1697 195l5-5 8 7 16-15 5 5-21 21z" fill="#c9cbc9"/><path d="M1757 223l17 17M1774 223l-17 17" stroke="#c9c9c9" stroke-width="11" stroke-linecap="round"/><path d="M1757 223l17 17M1774 223l-17 17" stroke="#f2bcb4" stroke-width="8"/></svg>
<div class="pane"><button>${ic('home')}</button><button>${ic('library')}</button><button>${ic('folder')}</button><button>${ic('palette')}</button><button class="on">${ic('ball')}</button><button>${ic('sheet')}</button></div>`);

define('study-tabs', `
  :host{display:flex;height:19px;background:#f7f7f7;border-top:1px solid #888;border-bottom:1px solid #888;line-height:16px;position:relative}
  .nav{display:flex;margin-left:33px;background:#aeb4b8;width:78px}.nav button{flex:1;border:1px solid #8f979c;color:#848c92;display:grid;place-items:center}.nav svg{width:10px;height:10px}
  .on,.t{padding-bottom:1px;border-right:1px solid #999;white-space:nowrap}.t{background:#d3d3d3}.on{width:56px;background:#f7f7f7;padding-left:4px}small{font-size:14px}.a{width:69px}.b{width:97px;padding-right:8px}
`, `<div class="nav">${['M1 0h2v10H1zM9 0v10L3 5z', 'M8 0v10L2 5z', 'M2 0v10l6-5z', 'M7 0h2v10H7zM1 0v10l6-5z'].map(d => `<button><svg viewBox="0 0 10 10"><path d="${d}" fill="currentColor"/></svg></button>`).join('')}</div>
<button class="on">模型</button><button class="t a"><small>3D</small> 视图</button><button class="t b">运动算例 1</button>`);

define('status-bar', `
  :host{display:flex;height:17px;padding:0 3px 0 2px;background:#f7f7f7;line-height:24px;overflow:hidden;white-space:nowrap}
  .msg{flex:1}span{flex:none}.a{width:117px}.b{width:88px}.c{width:38px}.d{width:51px}.s{width:10px;border-left:1px solid #bbb;height:17px}.e{width:98px;padding-left:4px;border-left:1px solid #bbb}
  .g{width:19px;border-left:1px solid #bbb;height:17px}.h{width:187px;border-left:1px solid #bbb;color:#aaa;padding-left:37px;display:flex;align-items:center;gap:23px;height:24px}.h i{border:4px solid transparent;border-top:0;border-bottom:5px solid #888}
  sw-icon{width:20px;height:20px;margin-top:3px}
`, `<span class="msg">选择一把手来修改参数</span><span class="a">-165.54mm</span><span class="b">57.42mm</span><span class="c">0mm</span><span class="d">欠定义</span><span class="s"></span><span class="e">在编辑 草图1</span><span class="g"></span><span class="h">自定义<i></i></span>${ic('tag')}`);

define('video-mark', `
  :host{position:absolute;right:18px;top:18px;display:flex;align-items:center;height:48px;z-index:5;pointer-events:none}
  svg{width:73px;height:48px;overflow:visible}span{font:300 46px/48px "Noto Sans CJK SC",sans-serif;color:rgba(190,190,190,.4);-webkit-text-stroke:1px rgba(160,160,160,.4)}
`, `<svg viewBox="0 0 73 48"><g fill="none" stroke="#b5b5b5" stroke-width="1.200"><path d="M1 8q8-2 9 7v20q1 8 10 8M1 11q5 0 6 6v20q2 8 12 8"/><path d="M26 7l4-6 4 5h20l4-5 4 6q8 2 8 9v21q0 9-9 10H26q-8-1-9-9V16q0-8 9-9zM28 10h32q6 1 6 7v4m0 14q-1 8-7 8H27q-6 0-7-7v-6m0-9v-5q1-6 8-6M20 27h4q2 3 0 4h-4m0 1h4q2 3 0 5h-4M66 27h-4q-2 3 0 4h4m0 1h-4q-2 3 0 5h4"/><path d="M33 11h9v3h-9zM47 11h9v3h-9zM33 17h23v3H33zM40 25v13l10-6z"/></g></svg><span>虎课网</span>`);

define('sw-app', `
  :host{display:block;height:100%;padding:0 99px 0 79px;position:relative}
  .win{display:flex;flex-direction:column;height:100%;background:#f7f7f7}
  main{flex:1;min-height:0;display:flex;flex-direction:column;position:relative}
  .bar{display:flex;height:27px;position:relative;z-index:1;align-items:flex-start}.body{display:flex;flex:1;min-height:0;position:relative}
`, `<div class="win"><title-bar></title-bar><sw-ribbon></sw-ribbon>
<main><model-scene></model-scene><div class="bar"><command-tabs></command-tabs><heads-up-bar></heads-up-bar></div>
<div class="body"><property-panel></property-panel><view-overlay></view-overlay></div></main>
<study-tabs></study-tabs><status-bar></status-bar></div><video-mark></video-mark>`);

/* fill the form controls and pre-select the depth value for typing */
const panel = document.querySelector('sw-app').shadowRoot.querySelector('property-panel').shadowRoot;
panel.querySelectorAll('drop-down').forEach(d => d.shadowRoot.querySelector('select').add(new Option(d.getAttribute('options'))));
panel.querySelectorAll('num-field').forEach(n => {
  const input = n.shadowRoot.querySelector('input');
  input.value = n.getAttribute('value') || '';
  input.disabled = n.hasAttribute('off');
  if (input.value) { input.focus(); input.select(); }
});
</script>
</body>
</html>
